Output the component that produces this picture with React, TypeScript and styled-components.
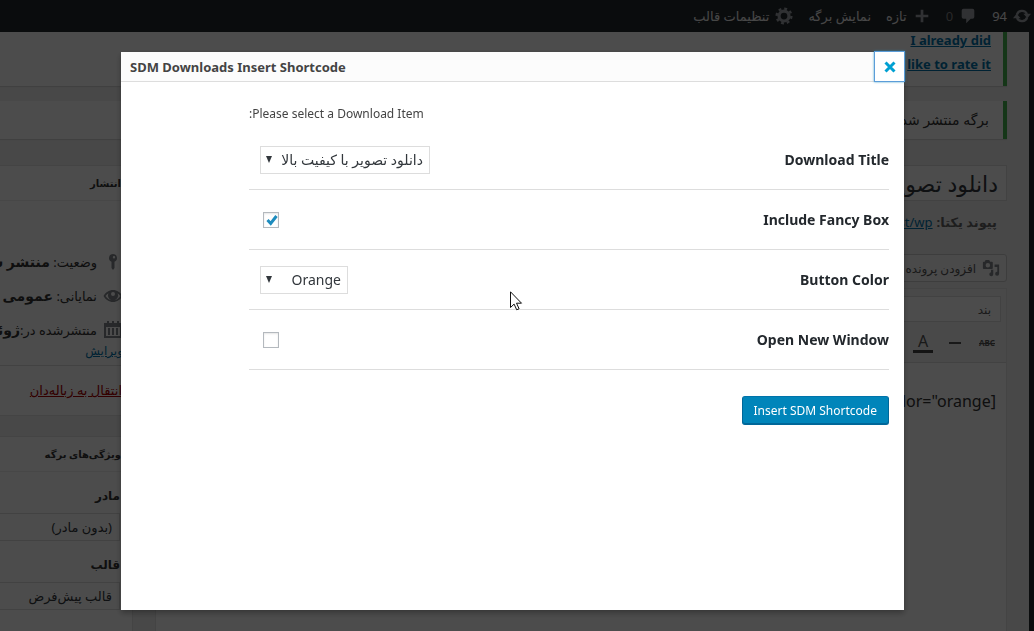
import React, { useState } from 'react';
import styled, { createGlobalStyle, css } from 'styled-components';

const Global = createGlobalStyle`
  * { box-sizing: border-box; }
  body { margin: 0; background: #f1f1f1; overflow: hidden; }
  body, button, input, select { font-family: "Noto Sans", "DejaVu Sans", sans-serif; }
  a { color: #0073aa; }
`;

const Page = styled.div`
  height: 100vh;
  overflow: hidden;
  display: flex;
  flex-direction: column;
  font-size: 13px;
  line-height: 20px;
  color: #333;
`;

const AdminBar = styled.header`
  flex: none;
  height: 32px;
  padding-inline: 3px;
  display: flex;
  align-items: center;
  gap: 15px;
  background: #23282d;
  color: #eee;
  font-size: 13px;
`;

const BarItem = styled.span<{ $faint?: boolean }>`
  display: flex;
  align-items: center;
  gap: 6px;
  color: ${(p) => (p.$faint ? '#888' : '#eee')};
  svg { width: 18px; height: 18px; fill: #a0a5aa; }
`;

const Shell = styled.div`
  flex: 1;
  min-height: 0;
  display: flex;
`;

const MenuStrip = styled.nav`
  flex: none;
  width: 5px;
  background: #23282d;
`;

const Content = styled.main`
  flex: 1;
  min-width: 0;
  padding-inline-start: 22px;
`;

const Notice = styled.section`
  margin-bottom: 15px;
  padding: 9px 14px;
  background: #fff;
  border-inline-start: 4px solid #46b450;
  box-shadow: 0 1px 1px rgba(0, 0, 0, 0.1);
  font-size: 14px;
`;

const RateNotice = styled(Notice)`
  display: flex;
  flex-direction: column;
  align-items: flex-start;
  gap: 8px;
  padding: 0 12px 14px;
  font-size: 13px;
  line-height: 16px;
  font-weight: 700;
`;

const Columns = styled.div`
  display: flex;
  align-items: flex-start;
  gap: 22px;
  padding-top: 11px;
`;

const Editor = styled.div`
  flex: 1;
  min-width: 0;
`;

const TitleInput = styled.input`
  width: 100%;
  height: 36px;
  padding: 0 8px;
  border: 1px solid #ddd;
  background: #fff;
  color: #32373c;
  font-size: 22px;
`;

const Permalink = styled.p`
  margin: 11px 0 22px;
  padding: 0 10px;
  color: #666;
  display: flex;
  gap: 4px;
`;

const MediaButton = styled.button`
  height: 28px;
  display: flex;
  align-items: center;
  gap: 6px;
  padding: 0 6px;
  border: 1px solid #ccc;
  border-radius: 3px;
  background: #f7f7f7;
  color: #555;
  font-size: 12px;
  svg { width: 18px; height: 18px; fill: #82878c; }
`;

const EditorBox = styled.section`
  margin-top: 6px;
  height: 400px;
  border: 1px solid #e5e5e5;
  background: #fff;
`;

const Toolbar = styled.div`
  height: 74px;
  padding: 7px 5px;
  display: flex;
  flex-direction: column;
  gap: 10px;
  background: #f5f5f5;
  border-bottom: 1px solid #ddd;
`;

const FormatButton = styled.button`
  width: 160px;
  height: 26px;
  padding: 0 9px;
  text-align: start;
  background: #fff;
  border: 1px solid #ddd;
  color: #555;
  font-size: 12px;
`;

const ToolRow = styled.div`
  display: flex;
  align-items: center;
  gap: 16px;
  padding-inline: 4px;
`;

const Tool = styled.button<{ $kind: 'strike' | 'rule' | 'color' }>`
  border: 0;
  padding: 0;
  background: none;
  color: #555;
  ${(p) =>
    p.$kind === 'strike' &&
    css`
      font-size: 8px;
      font-weight: 700;
      width: 20px;
      text-decoration: line-through;
    `}
  ${(p) =>
    p.$kind === 'rule' &&
    css`
      width: 12px;
      height: 2px;
      background: #555;
    `}
  ${(p) =>
    p.$kind === 'color' &&
    css`
      width: 20px;
      font-size: 16px;
      line-height: 18px;
      border-bottom: 3px solid #444;
    `}
`;

const Body = styled.p`
  margin: 0;
  padding: 26px 10px;
  font-size: 16px;
  line-height: 24px;
  text-align: right;
`;

const Sidebar = styled.aside`
  flex: none;
  width: 133px;
`;

const PostBox = styled.section`
  margin-bottom: 20px;
  background: #fff;
  border: 1px solid #e5e5e5;
  border-inline-end: 0;
`;

const BoxTitle = styled.h2`
  margin: 0;
  height: 35px;
  padding: 0 11px;
  border-bottom: 1px solid #eee;
  display: flex;
  align-items: center;
  font-size: 10px;
  white-space: nowrap;
`;

const StatusList = styled.ul`
  margin: 0;
  padding: 44px 9px 0;
  list-style: none;
  height: 164px;
`;

const Status = styled.li`
  height: 34px;
  display: flex;
  align-items: center;
  gap: 6px;
  white-space: nowrap;
  font-size: 13px;
  svg { flex: none; width: 20px; height: 20px; fill: #82878c; }
  b { font-size: 14px; }
`;

const EditLink = styled.a`
  display: block;
  line-height: 8px;
  font-size: 12px;
`;

const Footer = styled.footer`
  height: 50px;
  padding: 14px 10px;
  border-top: 1px solid #ddd;
  background: #fdfdfd;
  font-size: 13px;
  white-space: nowrap;
  a { color: #a00; }
`;

const Attribute = styled.label`
  display: block;
  padding: 14px 12px 0;
  font-size: 12px;
  font-weight: 700;
  white-space: nowrap;
`;

const AttributeSelect = styled.select`
  display: block;
  appearance: none;
  width: 200px;
  height: 28px;
  margin-top: 7px;
  padding: 0 7px;
  border: 1px solid #ddd;
  background: #fff;
  color: #32373c;
  font-size: 13px;
`;

const Backdrop = styled.div`
  position: fixed;
  inset: 0;
  display: flex;
  padding: 52px 130px 21px 121px;
  background: rgba(0, 0, 0, 0.7);
`;

const Dialog = styled.div`
  flex: 1;
  min-width: 0;
  background: #fff;
  box-shadow: 0 3px 6px rgba(0, 0, 0, 0.3);
`;

const DialogHeader = styled.div`
  height: 30px;
  display: flex;
  flex-direction: row-reverse;
  align-items: center;
  justify-content: space-between;
  padding-left: 9px;
  background: #fcfcfc;
  border-bottom: 1px solid #ddd;
`;

const DialogTitle = styled.h1`
  margin: 0;
  font-size: 13px;
  line-height: 20px;
  color: #444;
`;

const Close = styled.button`
  width: 31px;
  height: 31px;
  margin-right: -1px;
  display: grid;
  place-items: center;
  padding: 0;
  background: #fff;
  border: 1px solid #5b9dd9;
  box-shadow: 0 0 2px rgba(30, 140, 190, 0.8);
  svg { width: 12px; height: 12px; stroke: #00a0d2; stroke-width: 3; fill: none; }
`;

const Form = styled.form`
  max-width: 655px;
  padding: 22px 15px 15px 0;
  font-size: 12px;
`;

const Intro = styled.p`
  margin: 0;
  line-height: 20px;
  padding-bottom: 6px;
  text-align: left;
  color: #444;
`;

const Row = styled.div`
  height: 60px;
  display: flex;
  align-items: center;
  justify-content: space-between;
  padding-left: 11px;
  border-bottom: 1px solid #ddd;
`;

const RowLabel = styled.label`
  font-size: 14px;
  font-weight: 700;
  color: #23282d;
`;

const SelectWrap = styled.span<{ $width: number }>`
  position: relative;
  width: ${(p) => p.$width}px;
  svg {
    position: absolute;
    left: 6px;
    top: 10px;
    width: 6px;
    height: 7px;
    fill: #32373c;
    pointer-events: none;
  }
`;

const Select = styled.select`
  display: block;
  appearance: none;
  width: 100%;
  height: 28px;
  padding: 0 6px;
  border: 1px solid #ddd;
  border-radius: 0;
  background: #fff;
  color: #32373c;
  font-size: 14px;
`;

const CheckWrap = styled.span`
  position: relative;
  margin-left: 3px;
  width: 16px;
  height: 16px;
  svg {
    position: absolute;
    inset: 0;
    width: 16px;
    height: 16px;
    fill: none;
    stroke: #1e8cbe;
    stroke-width: 3;
    pointer-events: none;
  }
`;

const Check = styled.input`
  appearance: none;
  display: block;
  width: 16px;
  height: 16px;
  margin: 0;
  border: 1px solid #b4b9be;
  background: #fff;
  box-shadow: inset 0 1px 2px rgba(0, 0, 0, 0.1);
`;

const Submit = styled.button`
  display: block;
  margin-top: 26px;
  height: 29px;
  padding: 0 11px;
  border: 1px solid #006799;
  border-radius: 3px;
  border-color: #0073aa #006799 #006799;
  box-shadow: inset 0 -1px 0 #006799;
  background: #0085ba;
  color: #fff;
  font-size: 12px;
`;

const Pointer = styled.svg`
  position: fixed;
  left: 510px;
  top: 291px;
  width: 13px;
  height: 20px;
  pointer-events: none;
`;

const GearIcon = () => (
  <svg viewBox="0 0 20 20">
    <g fill="none" stroke="#a0a5aa">
      <circle cx="10" cy="10" r="5.500" strokeWidth="3.500" />
      <circle cx="10" cy="10" r="8.200" strokeWidth="2.600" strokeDasharray="3.200 3.240" />
    </g>
  </svg>
);
const UpdateIcon = () => (
  <svg viewBox="0 0 20 20">
    <g fill="none" stroke="#a0a5aa" strokeWidth="2.600">
      <path d="M4.300 8.500A6 6 0 0 1 15.500 7.800" />
      <path d="M15.700 11.500A6 6 0 0 1 4.500 12.200" />
    </g>
    <path d="M11.500 7.500h8.500l-4 5z" />
    <path d="M0 12.500h8.500L4 7.500z" />
  </svg>
);
const CommentIcon = () => (
  <svg viewBox="0 0 20 20">
    <path d="M5 2h10a2 2 0 0 1 2 2v7a2 2 0 0 1-2 2h-2l-5 5v-5H5a2 2 0 0 1-2-2V4a2 2 0 0 1 2-2z" />
  </svg>
);
const PlusIcon = () => (
  <svg viewBox="0 0 20 20">
    <path d="M17 8.500v3h-5.500V17h-3v-5.500H3v-3h5.500V3h3v5.500z" />
  </svg>
);
const PinIcon = () => (
  <svg viewBox="0 0 20 20">
    <path fillRule="evenodd" d="M10 2a4 4 0 0 1 1.500 7.700V16L10 18l-1.500-2V9.700A4 4 0 0 1 10 2zm1 2a1.200 1.200 0 1 0 0 2.400A1.200 1.200 0 0 0 11 4z" />
  </svg>
);
const EyeIcon = () => (
  <svg viewBox="0 0 20 20">
    <path fillRule="evenodd" d="M10 4c4 0 7.500 2.500 9.500 6-2 3.500-5.500 6-9.500 6S2.500 13.500.5 10C2.500 6.500 6 4 10 4zM5.500 7.200A11 11 0 0 0 2.500 10c1.700 2.600 4.400 4.400 7.500 4.400s5.800-1.800 7.500-4.400a11 11 0 0 0-3-2.800 5 5 0 1 1-9 0zM10 6a2 2 0 0 0-2 2 2 2 0 0 0 2 2 2 2 0 0 0 0-4z" />
  </svg>
);
const CalendarIcon = () => (
  <svg viewBox="0 0 20 20">
    <path fillRule="evenodd" d="M1 3h3V1h2v2h3V1h2v2h3V1h2v2h3v15H1zM3 7v9h14V7z" />
    <path d="M5 8h2v7H5zM9 8h2v7H9zM13 8h2v7h-2z" />
  </svg>
);
const MediaIcon = () => (
  <svg viewBox="0 0 20 20">
    <path fillRule="evenodd" d="M2 3h1l1-2h4l1 2h2a1 1 0 0 1 1 1v6a1 1 0 0 1-1 1H2a1 1 0 0 1-1-1V4a1 1 0 0 1 1-1zm4.500 1.500a2.500 2.500 0 1 0 0 5 2.500 2.500 0 0 0 0-5z" />
    <path d="M14 6h5v10.500a2.200 2.200 0 1 1-2-2.200V9h-3zM10 12h2.500v5a2.200 2.200 0 1 1-2.500-2.200z" />
  </svg>
);
const Arrow = () => (
  <svg viewBox="0 0 6 7">
    <path d="M0 0h6L3 7z" />
  </svg>
);

function CheckBox({ id, initial }: { id: string; initial: boolean }) {
  const [on, setOn] = useState(initial);
  return (
    <CheckWrap>
      <Check id={id} type="checkbox" checked={on} onChange={(e) => setOn(e.target.checked)} />
      {on && (
        <svg viewBox="0 0 16 16">
          <path d="M4.500 8l3.200 3.500L13.500 4" />
        </svg>
      )}
    </CheckWrap>
  );
}

export default function App() {
  return (
    <>
      <Global />
      <Page dir="rtl">
        <AdminBar>
          <BarItem><UpdateIcon />94</BarItem>
          <BarItem $faint><CommentIcon />0</BarItem>
          <BarItem><PlusIcon />تازه</BarItem>
          <BarItem>نمایش برگه</BarItem>
          <BarItem><GearIcon />تنظیمات قالب</BarItem>
        </AdminBar>
        <Shell>
          <MenuStrip />
          <Content>
            <RateNotice>
              <a href="#did">I already did</a>
              <a href="#rate">like to rate it</a>
            </RateNotice>
            <Notice>برگه منتشر شد.</Notice>
            <Columns>
              <Editor>
                <TitleInput aria-label="عنوان" defaultValue="دانلود تصویر" />
                <Permalink>
                  <strong>پیوند یکتا:</strong>
                  <a href="#permalink" dir="ltr">test/wp</a>
                </Permalink>
                <MediaButton><MediaIcon />افزودن پرونده</MediaButton>
                <EditorBox>
                  <Toolbar>
                    <FormatButton>بند</FormatButton>
                    <ToolRow>
                      <Tool $kind="strike">ABC</Tool>
                      <Tool $kind="rule" aria-label="خط افقی" />
                      <Tool $kind="color">A</Tool>
                    </ToolRow>
                  </Toolbar>
                  <Body dir="ltr">color="orange]</Body>
                </EditorBox>
              </Editor>
              <Sidebar>
                <PostBox>
                  <BoxTitle>انتشار</BoxTitle>
                  <StatusList>
                    <Status><PinIcon /><span>وضعیت: <b>منتشر شده</b></span></Status>
                    <Status><EyeIcon /><span>نمایانی: <b>عمومی</b></span></Status>
                    <Status><CalendarIcon /><span>منتشرشده در:<b>ژوئن</b></span></Status>
                    <li><EditLink href="#edit">ویرایش</EditLink></li>
                  </StatusList>
                  <Footer><a href="#trash">انتقال به زباله‌دان</a></Footer>
                </PostBox>
                <PostBox>
                  <BoxTitle>ویژگی‌های برگه</BoxTitle>
                  <Attribute>
                    مادر
                    <AttributeSelect><option>(بدون مادر)</option></AttributeSelect>
                  </Attribute>
                  <Attribute>
                    قالب
                    <AttributeSelect><option>قالب پیش‌فرض</option></AttributeSelect>
                  </Attribute>
                  <Attribute>ترتیب</Attribute>
                </PostBox>
              </Sidebar>
            </Columns>
          </Content>
        </Shell>
      </Page>
      <Backdrop dir="rtl">
        <Dialog role="dialog" aria-labelledby="dialog-title">
          <DialogHeader dir="ltr">
            <Close aria-label="Close">
              <svg viewBox="0 0 12 12"><path d="M1.500 1.500l9 9M10.500 1.500l-9 9" /></svg>
            </Close>
            <DialogTitle id="dialog-title">SDM Downloads Insert Shortcode</DialogTitle>
          </DialogHeader>
          <Form onSubmit={(e) => e.preventDefault()}>
            <Intro>Please select a Download Item:</Intro>
            <Row>
              <RowLabel htmlFor="item">Download Title</RowLabel>
              <SelectWrap $width={170}>
                <Select id="item"><option>دانلود تصویر با کیفیت بالا</option></Select>
                <Arrow />
              </SelectWrap>
            </Row>
            <Row>
              <RowLabel htmlFor="fancy">Include Fancy Box</RowLabel>
              <CheckBox id="fancy" initial />
            </Row>
            <Row>
              <RowLabel htmlFor="color">Button Color</RowLabel>
              <SelectWrap $width={88}>
                <Select id="color"><option>Orange</option></Select>
                <Arrow />
              </SelectWrap>
            </Row>
            <Row>
              <RowLabel htmlFor="window">Open New Window</RowLabel>
              <CheckBox id="window" initial={false} />
            </Row>
            <Submit type="submit">Insert SDM Shortcode</Submit>
          </Form>
        </Dialog>
      </Backdrop>
      <Pointer viewBox="0 0 13 20">
        <path d="M.5.8v15.700l3.600-3.400 2.600 5.700 2.400-1-2.600-5.600h5z" fill="#fff" stroke="#111" />
      </Pointer>
    </>
  );
}
